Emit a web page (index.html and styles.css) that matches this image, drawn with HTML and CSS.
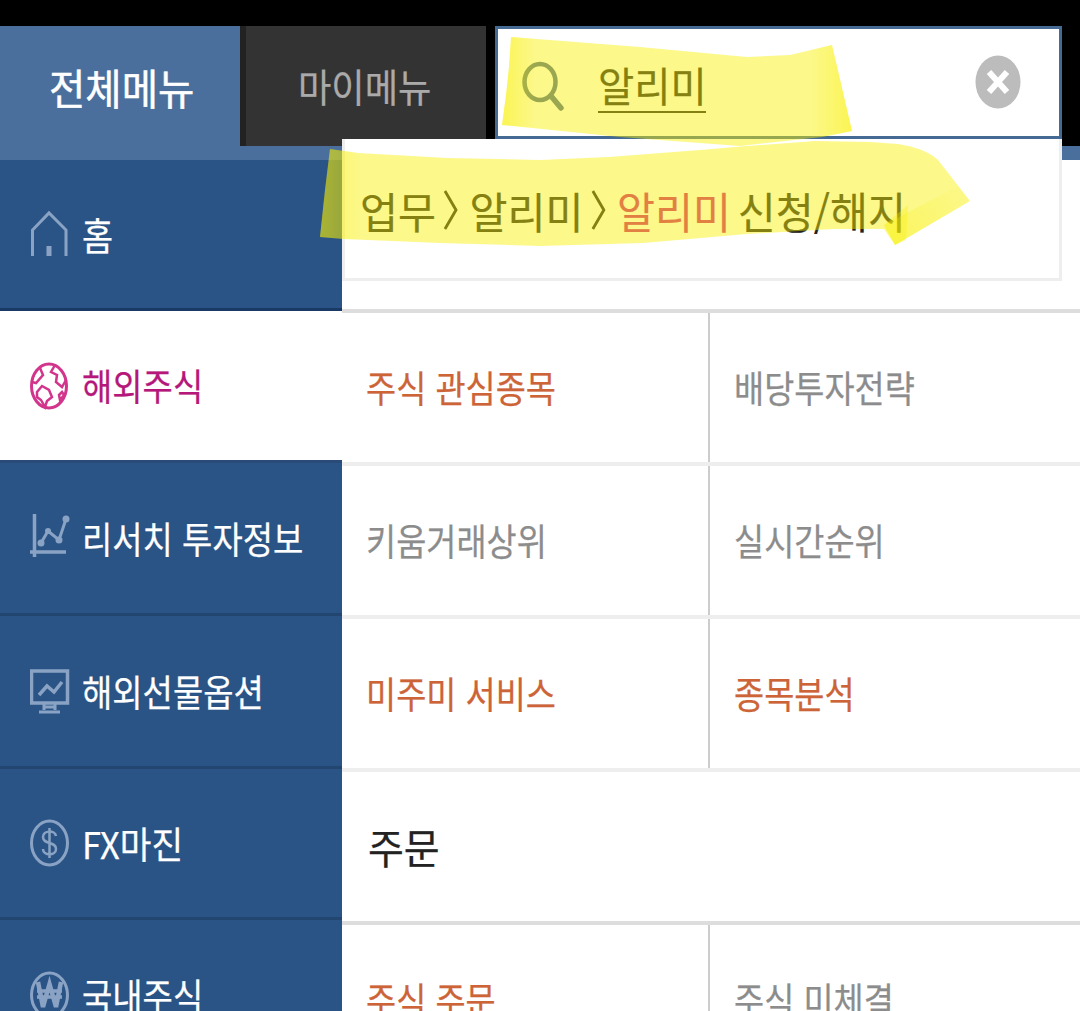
FILE: index.html
```html
<!DOCTYPE html>
<html lang="ko">
<head>
<meta charset="utf-8">
<title>전체메뉴</title>
<link rel="stylesheet" href="styles.css">
</head>
<body>
<div class="app">
  <div class="topbar"></div>
  <header class="header">
    <div class="tab-all"><span class="t">전체메뉴</span></div>
    <div class="header-right">
      <div class="header-row">
        <div class="tab-my"><span class="t">마이메뉴</span></div>
        <div class="search">
          <svg class="search-icon" width="44" height="50" viewBox="0 0 44 50"><ellipse cx="19" cy="21" rx="15.500" ry="18" fill="none" stroke="#4a6a94" stroke-width="4.500"/><path d="M30 35 L40 47" stroke="#4a6a94" stroke-width="5.500" stroke-linecap="round"/></svg>
          <span class="query"><span class="t">알리미</span></span>
          <svg class="clear-icon" width="46" height="54" viewBox="0 0 46 54"><ellipse cx="23" cy="27" rx="22.500" ry="26.500" fill="#bcbcbc"/><path d="M14 17 L32 37 M32 17 L14 37" stroke="#fff" stroke-width="6"/></svg>
        </div>
      </div>
      <div class="header-strip"></div>
    </div>
  </header>
  <main class="body">
    <nav class="side">
      <a class="side-item home">
        <svg class="ico" width="40" height="48" viewBox="0 0 40 48"><path d="M2.500 46 V20 L19 3 L36 20 V46" fill="none" stroke="#8aa3c4" stroke-width="3"/><rect x="16.500" y="36" width="5" height="10" fill="#8aa3c4"/></svg>
        <span class="t">홈</span>
      </a>
      <a class="side-item active">
        <svg class="ico" width="40" height="48" viewBox="0 0 40 48"><g fill="none" stroke="#d2358c" stroke-width="3"><ellipse cx="19" cy="24" rx="17.500" ry="22"/><path d="M10 6 L13 13 L6 21 L2 20 M25 3 L21 10 L27 13 L26 20 L32 25 L36 18" stroke-width="2.500"/><path d="M7 30 L12 24 L19 28 L22 35 L17 39 L15 45 L11 38 L7 35 Z" stroke-width="2.500"/><path d="M29 33 L32 30 L34 33 L30 38 Z" stroke-width="2.500"/></g></svg>
        <span class="t">해외주식</span>
      </a>
      <a class="side-item research">
        <svg class="ico" width="40" height="48" viewBox="0 0 40 48"><g fill="none" stroke="#8aa3c4"><path d="M4.500 0 V43 M0 38 H36" stroke-width="3.500"/><path d="M11 29 L18 17 L29 26 L36 5" stroke-width="3"/></g><g fill="#8aa3c4"><circle cx="11" cy="29" r="3.500"/><circle cx="18" cy="17" r="3"/><circle cx="29" cy="26" r="3.500"/><circle cx="36" cy="5" r="3.500"/></g></svg>
        <span class="t">리서치 투자정보</span>
      </a>
      <a class="side-item">
        <svg class="ico" width="40" height="48" viewBox="0 0 40 48"><g fill="none" stroke="#8aa3c4"><rect x="1.500" y="4" width="36" height="32" stroke-width="3.500"/><path d="M9 28 L17 19 L24 25 L32 15" stroke-width="3.500"/><path d="M14 37 V43 M25 37 V43 M14 40 H25" stroke-width="3"/><path d="M9 45 H30" stroke-width="3"/></g></svg>
        <span class="t">해외선물옵션</span>
      </a>
      <a class="side-item fx">
        <svg class="ico" width="40" height="48" viewBox="0 0 40 48"><g fill="none" stroke="#8aa3c4"><ellipse cx="19.500" cy="24" rx="18" ry="22" stroke-width="3"/><path d="M26 17 C25 11 13 11 13 18 C13 26 26 22 26 30 C26 37 13 37 13 30 M19.500 9 V39" stroke-width="2.500"/></g></svg>
        <span class="t">FX마진</span>
      </a>
      <a class="side-item">
        <svg class="ico" width="40" height="48" viewBox="0 0 40 48"><g fill="none" stroke="#8aa3c4"><ellipse cx="19.500" cy="24" rx="18" ry="22" stroke-width="3"/><path d="M8 11 L13 36 L19.500 13 L26 36 L31 11" stroke-width="4.500"/><path d="M7 20 H32 M7 26 H32" stroke-width="3.500"/></g></svg>
        <span class="t">국내주식</span>
      </a>
    </nav>
    <section class="content">
      <div class="row strong"><div class="cell accent"><span class="t">주식 관심종목</span></div><div class="cell"><span class="t">배당투자전략</span></div></div>
      <div class="row"><div class="cell"><span class="t">키움거래상위</span></div><div class="cell"><span class="t">실시간순위</span></div></div>
      <div class="row"><div class="cell accent"><span class="t">미주미 서비스</span></div><div class="cell accent"><span class="t">종목분석</span></div></div>
      <div class="row"><div class="cell heading"><span class="t">주문</span></div></div>
      <div class="row strong"><div class="cell accent"><span class="t">주식 주문</span></div><div class="cell"><span class="t">주식 미체결</span></div></div>
    </section>
  </main>
  <div class="dropdown">
    <div class="crumb">
      <span>업무</span>
      <svg class="sep" width="15" height="40" viewBox="0 0 15 40"><path d="M1.500 1 L13 20 L1.500 39" fill="none" stroke="#222" stroke-width="3"/></svg>
      <span>알리미</span>
      <svg class="sep" width="15" height="40" viewBox="0 0 15 40"><path d="M1.500 1 L13 20 L1.500 39" fill="none" stroke="#222" stroke-width="3"/></svg>
      <span><b class="hit">알리미</b> 신청/해지</span>
    </div>
  </div>
  <svg class="marker" width="1080" height="1011" viewBox="0 0 1080 1011">
    <defs>
      <linearGradient id="endR1" gradientUnits="userSpaceOnUse" x1="810" x2="852" y1="0" y2="0"><stop offset="0" stop-color="#f8f000" stop-opacity="0"/><stop offset="1" stop-color="#f8f000" stop-opacity=".4"/></linearGradient>
      <linearGradient id="endL1" gradientUnits="userSpaceOnUse" x1="502" x2="535" y1="0" y2="0"><stop offset="0" stop-color="#f8f000" stop-opacity=".4"/><stop offset="1" stop-color="#f8f000" stop-opacity="0"/></linearGradient>
      <linearGradient id="endL2" gradientUnits="userSpaceOnUse" x1="320" x2="362" y1="0" y2="0"><stop offset="0" stop-color="#f8f000" stop-opacity=".3"/><stop offset="1" stop-color="#f8f000" stop-opacity="0"/></linearGradient>
      <linearGradient id="endR2" gradientUnits="userSpaceOnUse" x1="900" x2="970" y1="240" y2="190"><stop offset="0" stop-color="#f8f000" stop-opacity=".3"/><stop offset="1" stop-color="#f8f000" stop-opacity="0"/></linearGradient>
      <path id="stroke1" d="M511 37 L640 47 L747 57 L790 55 L832 45 L852 131 L822 137 L740 146 L620 137 L502 125 L506 95 L509 67 Z"/>
      <path id="stroke2" d="M330 149 L358 153 L447 158 L540 160 L609 157 L700 150 L747 146 L815 141 L870 142 L898 144 Q925 148 938 160 L970 201 L895 245 L884 229 L833 229 L747 234 L643 243 L540 246 L440 243 L344 239 L320 237 L325 190 Z"/>
    </defs>
    <use class="ink" href="#stroke1"/>
    <use class="ink" href="#stroke2"/>
    <use fill="url(#endR1)" href="#stroke1"/>
    <use fill="url(#endL1)" href="#stroke1"/>
    <use fill="url(#endL2)" href="#stroke2"/>
    <path fill="url(#endR2)" d="M884 225 L958 186 L970 201 L895 245 Z"/>
    <path fill="#f8f000" fill-opacity=".3" d="M884 225 L908 205 L906 240 L895 245 Z"/>
  </svg>
</div>
</body>
</html>
```

FILE: styles.css
```css
* { box-sizing: border-box; }
html, body { margin: 0; padding: 0; background: #000; }
body { font-family: "Noto Sans CJK KR", "Noto Sans", sans-serif; overflow: hidden; }
.app { position: relative; width: 1080px; height: 1011px; overflow: hidden; background: #fff; }
.t { display: inline-block; line-height: 1; white-space: nowrap; transform: scaleX(var(--sx, .87)); transform-origin: left center; -webkit-text-stroke: .25px currentColor; }

.topbar { height: 26px; background: #000; }
.header { display: flex; height: 134px; }
.tab-all { width: 240px; background: #4a6f9c; color: #fff; display: flex; align-items: center; padding-left: 49px; padding-bottom: 12px; font-size: 42px; --sx: .94; }
.tab-all .t { -webkit-text-stroke: .5px #fff; }
.header-right { flex: 1; display: flex; flex-direction: column; }
.header-row { height: 120px; background: #000; display: flex; align-items: flex-start; }
.header-strip { height: 14px; background: #4a6f9c; }
.tab-my { width: 246px; height: 120px; background: #333; border-left: 6px solid #222; color: #aaa; display: flex; align-items: center; padding-left: 52px; padding-bottom: 2px; font-size: 39px; --sx: .93; }
.search { width: 567px; height: 113px; margin-left: 9px; background: #fff; border: 3px solid #456a94; display: flex; align-items: center; position: relative; }
.search-icon { margin-left: 23px; margin-top: 7px; flex: none; }
.query { margin-left: 33px; border-bottom: 2px solid #222; color: #222; font-size: 41px; width: 108px; height: 59px; display: block; margin-top: 2px; --sx: .96; }
.clear-icon { margin-left: auto; margin-right: 38px; flex: none; margin-top: -1px; }

.body { display: flex; height: 851px; }
.side { width: 342px; flex: none; background: #2b5486; display: flex; flex-direction: column; }
.side-item { display: flex; align-items: center; height: 153px; flex: none; padding-left: 30px; color: #fff; font-size: 37px; border-bottom: 3px solid #234670; --sx: .89; }
.side-item .ico { flex: none; }
.side-item .t { margin-left: 13px; position: relative; left: -1px; }
.side-item.home { height: 151px; border-bottom-color: #1a3a66; font-size: 38px; }
.side-item.active { height: 152px; background: #fff; color: #b5177a; border-bottom-color: #2a4a78; }
.side-item.fx { height: 151px; --sx: .93; }

.content { flex: 1; padding-top: 149px; background: #fff; }
.row { display: flex; height: 153px; border-top: 4px solid #eee; }
.row.strong { border-top-color: #ddd; }
.cell { width: 368px; flex: none; display: flex; align-items: center; padding-left: 24px; color: #8c8c8c; font-size: 37px; --sx: .885; }
.cell:first-child { border-right: 2px solid #ccc; }
.cell + .cell { padding-left: 24px; }
.cell.accent { color: #cc6438; }
.cell.heading { color: #222; font-size: 41px; --sx: .95; border-right: 0; padding-left: 26px; }

.dropdown { position: absolute; left: 342px; top: 139px; width: 720px; height: 142px; background: #fff; border: 3px solid #eee; border-top: 0; display: flex; align-items: center; padding-left: 15px; padding-top: 3px; }
.crumb { display: flex; align-items: center; white-space: nowrap; color: #222; font-size: 43px; line-height: 1; transform: scaleX(.96); transform-origin: left center; -webkit-text-stroke: .2px currentColor; }
.sep { flex: none; margin: 0 12px 0 8px; }
.hit { font-weight: 400; color: #d0207c; margin-right: -5px; }

.marker { position: absolute; left: 0; top: 0; pointer-events: none; }
.ink { fill: #f8f000; fill-opacity: .46; }
```
